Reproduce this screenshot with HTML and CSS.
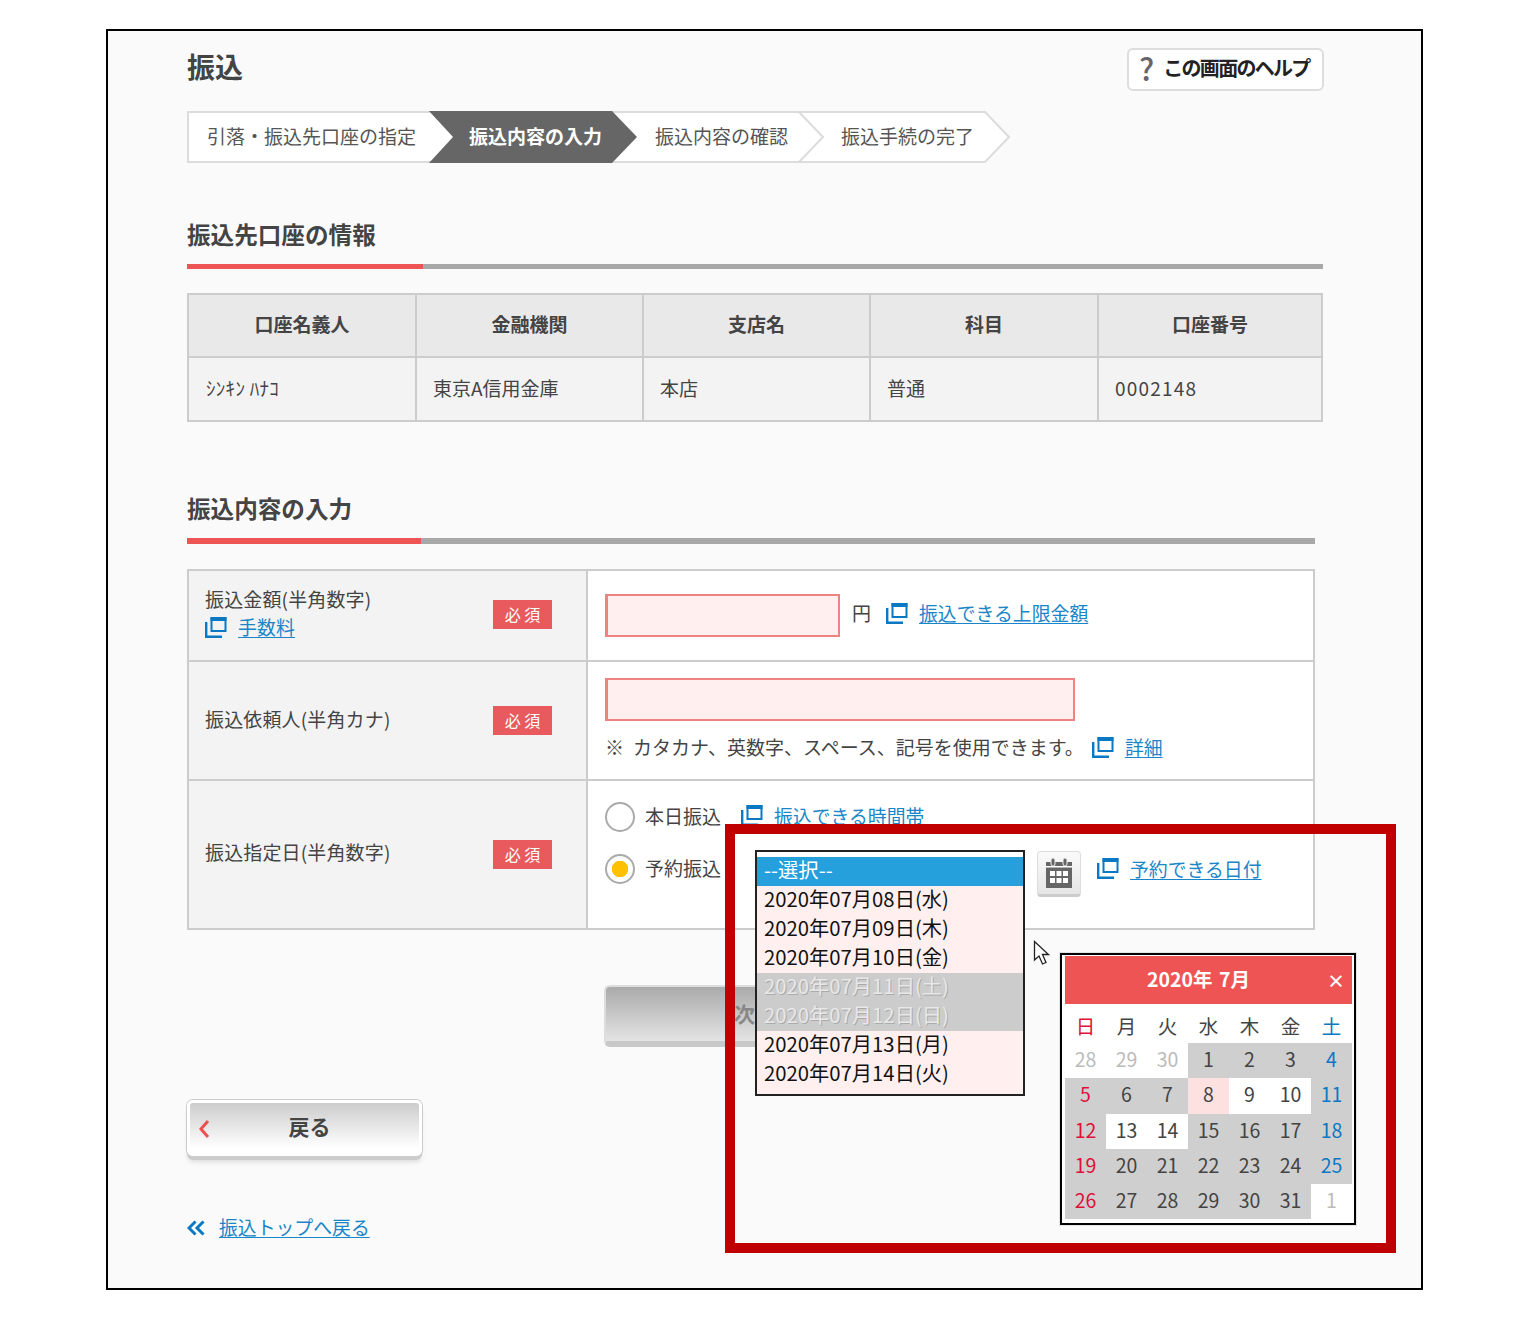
FILE: index.html
```html
<!DOCTYPE html>
<html lang="ja">
<head>
<meta charset="utf-8">
<title>振込</title>
<link rel="stylesheet" href="styles.css">
</head>
<body>
<svg class="defs" width="0" height="0" aria-hidden="true">
  <symbol id="win" viewBox="0 0 22 22">
    <path d="M1.2 6v14.8H17" fill="none" stroke="currentColor" stroke-width="2.4"/>
    <path d="M6.5 2h14v13h-14z" fill="none" stroke="currentColor" stroke-width="2"/>
    <rect x="5.5" y="1" width="16" height="4" fill="currentColor"/>
  </symbol>
</svg>
<main class="frame">
  <header class="top">
    <h1 class="title">振込</h1>
    <a class="help"><span class="help-mark">?</span><span class="help-text">この画面のヘルプ</span></a>
  </header>

  <nav class="steps">
    <svg class="steps-bg" width="823" height="52" viewBox="0 0 823 52">
      <path d="M1 1H798L822 26 798 51H1Z" fill="#fff" stroke="#dcdcdc" stroke-width="2"/>
      <path d="M612 1L636 26 612 51" fill="none" stroke="#dcdcdc" stroke-width="2"/>
      <path d="M242 0H425L450 26 425 52H242L266 26Z" fill="#666"/>
    </svg>
    <span class="step step-1">引落・振込先口座の指定</span>
    <span class="step step-2">振込内容の入力</span>
    <span class="step step-3">振込内容の確認</span>
    <span class="step step-4">振込手続の完了</span>
  </nav>

  <h2 class="section-title first">振込先口座の情報</h2>
  <div class="rule"><span class="rule-red"></span></div>

  <div class="account">
    <div class="ac ac-h">口座名義人</div>
    <div class="ac ac-h">金融機関</div>
    <div class="ac ac-h">支店名</div>
    <div class="ac ac-h">科目</div>
    <div class="ac ac-h ac-last">口座番号</div>
    <div class="ac ac-b ac-kana">ｼﾝｷﾝ ﾊﾅｺ</div>
    <div class="ac ac-b">東京A信用金庫</div>
    <div class="ac ac-b">本店</div>
    <div class="ac ac-b">普通</div>
    <div class="ac ac-b ac-last ac-num">0002148</div>
  </div>

  <h2 class="section-title second">振込内容の入力</h2>
  <div class="rule rule-second"><span class="rule-red rule-red-second"></span></div>

  <form class="form">
    <div class="row row-1">
      <div class="label">
        <div class="label-text">
          <div>振込金額(半角数字)</div>
          <a class="link link-lead"><svg class="win"><use href="#win"/></svg><span class="u">手数料</span></a>
        </div>
        <span class="badge">必 須</span>
      </div>
      <div class="field">
        <div class="inline">
          <span class="input input-s"></span>
          <span class="yen">円</span>
          <a class="link"><svg class="win"><use href="#win"/></svg><span class="u">振込できる上限金額</span></a>
        </div>
      </div>
    </div>
    <div class="row row-2">
      <div class="label">
        <div class="label-text">振込依頼人(半角カナ)</div>
        <span class="badge">必 須</span>
      </div>
      <div class="field field-2">
        <span class="input input-l"></span>
        <div class="note"><span class="note-mark">※</span>カタカナ、英数字、スペース、記号を使用できます。<a class="link link-note"><svg class="win"><use href="#win"/></svg><span class="u">詳細</span></a></div>
      </div>
    </div>
    <div class="row row-3">
      <div class="label">
        <div class="label-text">振込指定日(半角数字)</div>
        <span class="badge">必 須</span>
      </div>
      <div class="field field-3">
        <div class="radio-line">
          <span class="radio"></span><span class="radio-label">本日振込</span>
          <a class="link link-time"><svg class="win"><use href="#win"/></svg><span class="u">振込できる時間帯</span></a>
        </div>
        <div class="radio-line">
          <span class="radio radio-on"></span><span class="radio-label">予約振込</span>
          <div class="date-select">
            <ul class="list">
              <li class="opt opt-sel">--選択--</li>
              <li class="opt">2020年07月08日(水)</li>
              <li class="opt">2020年07月09日(木)</li>
              <li class="opt">2020年07月10日(金)</li>
              <li class="opt opt-off">2020年07月11日(土)</li>
              <li class="opt opt-off">2020年07月12日(日)</li>
              <li class="opt">2020年07月13日(月)</li>
              <li class="opt">2020年07月14日(火)</li>
            </ul>
          </div>
          <span class="cal-btn">
            <svg width="28" height="32" viewBox="0 0 28 32">
              <path d="M1 5h26v26H1z" fill="#666"/>
              <rect x="1" y="9" width="26" height="1.5" fill="#fff"/>
              <rect x="6" y="1" width="4" height="8" rx="2" fill="#666" stroke="#eee" stroke-width="1"/>
              <rect x="18" y="1" width="4" height="8" rx="2" fill="#666" stroke="#eee" stroke-width="1"/>
              <path d="M5 14h5v5H5zM11.500 14h5v5h-5zM18 14h5v5h-5zM5 21h5v5H5zM11.500 21h5v5h-5zM18 21h5v5h-5z" fill="#fff"/>
            </svg>
          </span>
          <a class="link link-date"><svg class="win"><use href="#win"/></svg><span class="u">予約できる日付</span></a>
        </div>
      </div>
    </div>
  </form>

  <div class="btn btn-next">次へ</div>

  <a class="btn btn-back">
    <svg class="back-chev" width="12" height="20" viewBox="0 0 12 20"><path d="M10 2L3 10l7 8" fill="none" stroke="#ee5050" stroke-width="3"/></svg>
    <span>戻る</span>
  </a>

  <a class="link link-top">
    <svg class="top-chev" width="18" height="16" viewBox="0 0 18 16"><path d="M8.500 1.500L2 8l6.500 6.500M16.500 1.500L10 8l6.500 6.500" fill="none" stroke="#0a78c2" stroke-width="3"/></svg>
    <span class="u">振込トップへ戻る</span>
  </a>

  <div class="red-box"></div>

  <svg class="cursor" width="18" height="26" viewBox="0 0 18 26">
    <path d="M1.500 1.500V20l4.500-4 3.500 8 3.500-1.500-3.500-8h6z" fill="#fff" stroke="#222" stroke-width="1.300"/>
  </svg>

  <section class="calendar">
    <div class="cal-head"><span>2020年 7月</span><span class="cal-close">×</span></div>
    <div class="cal-grid">
      <div class="wd sun">日</div><div class="wd">月</div><div class="wd">火</div><div class="wd">水</div><div class="wd">木</div><div class="wd">金</div><div class="wd sat">土</div>
      <div class="d out">28</div><div class="d out">29</div><div class="d out">30</div><div class="d off">1</div><div class="d off">2</div><div class="d off">3</div><div class="d off sat">4</div>
      <div class="d off sun">5</div><div class="d off">6</div><div class="d off">7</div><div class="d today">8</div><div class="d">9</div><div class="d">10</div><div class="d off sat">11</div>
      <div class="d off sun">12</div><div class="d">13</div><div class="d">14</div><div class="d off">15</div><div class="d off">16</div><div class="d off">17</div><div class="d off sat">18</div>
      <div class="d off sun">19</div><div class="d off">20</div><div class="d off">21</div><div class="d off">22</div><div class="d off">23</div><div class="d off">24</div><div class="d off sat">25</div>
      <div class="d off sun">26</div><div class="d off">27</div><div class="d off">28</div><div class="d off">29</div><div class="d off">30</div><div class="d off">31</div><div class="d out">1</div>
    </div>
  </section>
</main>
</body>
</html>
```
FILE: styles.css
```css
* { box-sizing: border-box; }
html, body { margin: 0; padding: 0; background: #fff; }
body {
  font-family: "Noto Sans CJK JP", "Noto Sans", "Liberation Sans", sans-serif;
  font-size: 19px;
  color: #444;
  height: 1334px;
  overflow: hidden;
}
.defs { position: absolute; }
ul { list-style: none; margin: 0; padding: 0; }
h1, h2 { margin: 0; }

.frame {
  position: relative;
  width: 1317px;
  height: 1261px;
  margin: 29px 0 0 106px;
  padding: 17px 98px 0 79px;
  border: 2px solid #000;
  background: #fafafa;
}

.top { display: flex; justify-content: space-between; align-items: flex-start; height: 43px; }
.title { font-size: 28px; line-height: 36px; font-weight: 700; color: #444; }
.help {
  display: flex;
  align-items: center;
  gap: 9px;
  width: 197px;
  height: 43px;
  margin-right: -1px;
  padding: 0 0 5px 10px;
  background: #fff;
  border: 2px solid #ddd;
  border-radius: 6px;
}
.help-mark { font-size: 31px; line-height: 1; color: #666; font-weight: 500; }
.help-text { font-size: 20px; font-weight: 700; letter-spacing: -1.700px; color: #222; white-space: nowrap; }

.steps { position: relative; display: flex; align-items: center; width: 823px; height: 52px; margin-top: 20px; }
.steps-bg { position: absolute; left: 0; top: 0; }
.step { position: relative; padding-bottom: 4px; font-size: 19px; color: #555; white-space: nowrap; }
.step-1 { margin-left: 20px; width: 262px; }
.step-2 { width: 186px; color: #fff; font-weight: 700; }
.step-3 { width: 186px; }

.section-title { font-size: 23.600px; line-height: 32px; font-weight: 700; color: #444; padding-bottom: 14px; }
.first { margin-top: 55px; }
.second { margin-top: 70px; }
.rule { height: 5px; background: #a8a8a8; }
.rule-red { display: block; height: 100%; width: 236px; background: #ef5454; }
.rule-second { height: 6px; width: 1128px; }
.rule-red-second { width: 234px; }

.account {
  display: grid;
  grid-template-columns: 228px 227px 227px 228px 1fr;
  grid-template-rows: 63px 62px;
  width: 1136px;
  height: 129px;
  margin-top: 24px;
  border: 2px solid #ccc;
}
.ac { display: flex; align-items: center; border-right: 2px solid #ccc; }
.ac-last { border-right: 0; }
.ac-h { justify-content: center; padding-bottom: 5px; background: #e9e9e9; font-weight: 700; border-bottom: 2px solid #ccc; font-size: 19px; }
.ac-b { padding: 0 0 3px 16px; background: #f3f3f3; }
.ac-kana { padding-left: 17px; letter-spacing: .3px; }
.ac-num { letter-spacing: 1.200px; }

.form { width: 1128px; height: 361px; margin-top: 25px; border: 2px solid #ccc; border-bottom-width: 1px; background: #fff; }
.row { display: grid; grid-template-columns: 399px 1fr; border-bottom: 2px solid #ccc; }
.row-1 { height: 91px; }
.row-2 { height: 119px; }
.row-3 { height: 148px; border-bottom: 1px solid #ccc; }
.label {
  display: flex;
  align-items: center;
  justify-content: space-between;
  padding: 0 34px 0 16px;
  background: #f3f3f3;
  border-right: 2px solid #ccc;
}
.label-text { line-height: 30px; letter-spacing: .15px; }
.row-1 .label-text { padding-bottom: 2px; }
.row-1 .badge { margin-bottom: 3px; }
.row-2 .label-text { margin-bottom: 4px; }
.row-3 .label-text { margin-bottom: 6px; }
.link-lead { margin-top: -2px; }
.badge {
  width: 59px;
  height: 29px;
  background: #e85a5e;
  color: #fff;
  font-size: 16px;
  line-height: 28px;
  text-align: center;
  white-space: nowrap;
}
.field { padding-left: 17px; }
.inline { display: flex; align-items: center; height: 100%; }
.input { display: block; background: #fff0ef; border: 2px solid #f08282; border-left-width: 3px; }
.input-s { width: 235px; height: 43px; }
.input-l { width: 470px; height: 43px; }
.yen { margin: 0 0 6px 12px; }

.link { display: inline-flex; align-items: center; color: #1a86c8; white-space: nowrap; }
.u { font-size: 18.850px; text-decoration: underline; text-underline-offset: 2px; }
.win { width: 22px; height: 22px; color: #0a78c2; margin-right: 11px; flex: none; }
.inline .link { margin: 0 0 6px 15px; }
.field-2 { padding-top: 16px; }
.note { display: flex; align-items: center; margin-top: 11px; line-height: 30px; white-space: nowrap; }
.note-mark { width: 28px; }
.link-note { margin-left: 8px; }

.field-3 { padding-top: 10px; }
.radio-line { display: flex; align-items: center; height: 52px; }
.radio { flex: none; width: 30px; height: 30px; border: 2.500px solid #aaa; border-radius: 50%; background: #fff; }
.radio-on { background: radial-gradient(circle, #ffc000 0 8px, #fff 8.500px); }
.radio-label { margin: 0 0 4px 10px; white-space: nowrap; }
.link-time { margin: 0 0 4px 20px; }

.date-select { position: relative; flex: none; width: 270px; height: 46px; margin-left: 34px; }
.list {
  position: absolute;
  left: 0;
  top: 4px;
  z-index: 3;
  width: 270px;
  height: 246px;
  padding-top: 5px;
  background: #fff0ef;
  background-image: linear-gradient(#fff 0 5px, transparent 5px);
  border: 2px solid #222;
}
.opt { height: 29px; padding: 0 0 0 7px; font-size: 20.300px; line-height: 25px; color: #111; white-space: nowrap; }
.opt-sel { background: #25a0dc; color: #fff; }
.opt-off { background: #ccc; color: #e8e8e8; text-shadow: 1px 1px 0 #aaa; }

.cal-btn {
  flex: none;
  display: flex;
  align-items: center;
  justify-content: center;
  width: 44px;
  height: 46px;
  margin: 9px 0 0 12px;
  background: linear-gradient(#fafafa, #e6e6e6);
  border: 1px solid #ddd;
  border-bottom: 3px solid #ccc;
  border-radius: 4px;
}
.link-date { margin: 0 0 2px 16px; }

.btn { display: flex; align-items: center; justify-content: center; border-radius: 6px; font-weight: 700; }
.btn-next {
  width: 294px;
  height: 62px;
  margin: 55px 0 0 417px;
  padding: 0 0 2px 8px;
  font-size: 21px;
  color: #888;
  background: linear-gradient(#aaa, #e4e4e4);
  border: 2px solid #ddd;
  border-bottom: 6px solid #c8c8c8;
}
.btn-back {
  position: relative;
  width: 235px;
  height: 56px;
  margin-top: 53px;
  padding: 0 0 8px 10px;
  font-size: 21px;
  color: #444;
  background: linear-gradient(#ccc, #fff 85%);
  border: 3px solid #fff;
  border-bottom-width: 0;
  box-shadow: 0 0 0 1px #ccc, 0 4px 0 0 #ccc, 0 7px 5px -1px rgba(0, 0, 0, .12);
}
.back-chev { position: absolute; left: 8px; top: 16px; }
.link-top { display: flex; margin-top: 55px; height: 30px; gap: 14px; }
.top-chev { margin-top: 3px; }

.red-box { position: absolute; left: 617px; top: 793px; z-index: 2; width: 671px; height: 429px; border: 10px solid #c00000; }
.cursor { position: absolute; left: 925px; top: 909px; z-index: 4; }

.calendar {
  position: absolute;
  left: 952px;
  top: 922px;
  z-index: 3;
  width: 296px;
  height: 272px;
  padding: 1px 2px 0 3px;
  background: #fff;
  border: 2px solid #000;
  outline: 1px solid #e4e4e4;
}
.cal-head {
  position: relative;
  display: flex;
  align-items: center;
  justify-content: center;
  height: 48px;
  padding: 0 20px 3px 0;
  background: #ef5454;
  color: #fff;
  font-weight: 700;
  font-size: 19.500px;
  word-spacing: 2px;
}
.cal-close { position: absolute; right: 7px; top: 9px; font-size: 18px; line-height: 30px; }
.cal-grid {
  display: grid;
  grid-template-columns: repeat(7, 41px);
  grid-template-rows: 39px repeat(5, 35.300px);
  width: 287px;
  background: #fff;
}
.wd, .d { display: flex; align-items: center; justify-content: center; font-size: 19.500px; color: #444; }
.wd { padding-top: 4px; }
.d { padding-bottom: 4px; }
.off { background: #cfcfcf; }
.today { background: #fde0e0; }
.out { color: #bbb; }
.sun { color: #e0103a; }
.sat { color: #0a78c2; }
```
